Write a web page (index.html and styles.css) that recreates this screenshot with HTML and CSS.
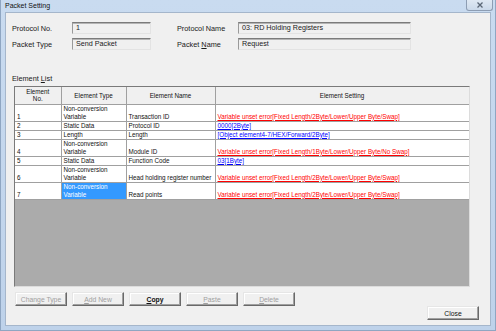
FILE: index.html
```html
<!DOCTYPE html>
<html lang="en">
<head>
    <meta charset="UTF-8">
    <title>Packet Setting</title>
    <link rel="stylesheet" href="styles.css">
</head>
<body>
    <div class="window">
        <!-- Title Bar -->
        <div class="title-bar">
            <span class="title">Packet Setting</span>
            <span class="close-x">
                <svg width="8" height="6" viewBox="0 0 8 6">
                    <path d="M1.5 0.5 L6.5 5.5 M6.5 0.5 L1.5 5.5" stroke="#5a6675" stroke-width="1.3" fill="none"/>
                </svg>
            </span>
        </div>

        <div class="client">
            <!-- Protocol Info -->
            <div class="info-grid">
                <span class="label">Protocol No.</span>
                <span class="field">1</span>
                <span class="label right">Protocol Name</span>
                <span class="field">03: RD Holding Registers</span>

                <span class="label">Packet Type</span>
                <span class="field">Send Packet</span>
                <span class="label right">Packet <u>N</u>ame</span>
                <span class="field">Request</span>
            </div>

            <div class="list-label">Element <u>L</u>ist</div>

            <!-- Element List -->
            <div class="grid-box">
                <table class="element-table">
                    <colgroup>
                        <col class="c-no">
                        <col class="c-type">
                        <col class="c-name">
                        <col class="c-setting">
                    </colgroup>
                    <thead>
                        <tr>
                            <th>Element<br>No.</th>
                            <th>Element Type</th>
                            <th>Element Name</th>
                            <th>Element Setting</th>
                        </tr>
                    </thead>
                    <tbody>
                        <tr>
                            <td>1</td>
                            <td>Non-conversion<br>Variable</td>
                            <td>Transaction ID</td>
                            <td><a class="err">Variable unset error[Fixed Length/2Byte/Lower/Upper Byte/Swap]</a></td>
                        </tr>
                        <tr>
                            <td>2</td>
                            <td>Static Data</td>
                            <td>Protocol ID</td>
                            <td><a class="ok">0000[2Byte]</a></td>
                        </tr>
                        <tr>
                            <td>3</td>
                            <td>Length</td>
                            <td>Length</td>
                            <td><a class="ok">[Object element4-7/HEX/Forward/2Byte]</a></td>
                        </tr>
                        <tr>
                            <td>4</td>
                            <td>Non-conversion<br>Variable</td>
                            <td>Module ID</td>
                            <td><a class="err">Variable unset error[Fixed Length/1Byte/Lower/Upper Byte/No Swap]</a></td>
                        </tr>
                        <tr>
                            <td>5</td>
                            <td>Static Data</td>
                            <td>Function Code</td>
                            <td><a class="ok">03[1Byte]</a></td>
                        </tr>
                        <tr>
                            <td>6</td>
                            <td>Non-conversion<br>Variable</td>
                            <td>Head holding register number</td>
                            <td><a class="err">Variable unset error[Fixed Length/2Byte/Lower/Upper Byte/Swap]</a></td>
                        </tr>
                        <tr>
                            <td>7</td>
                            <td class="selected">Non-conversion<br>Variable</td>
                            <td>Read points</td>
                            <td><a class="err">Variable unset error[Fixed Length/2Byte/Lower/Upper Byte/Swap]</a></td>
                        </tr>
                    </tbody>
                </table>
            </div>

            <!-- Buttons -->
            <div class="button-area">
                <div class="button-row">
                    <button class="btn" disabled>Chan<u>g</u>e Type</button>
                    <button class="btn" disabled><u>A</u>dd New</button>
                    <button class="btn default"><u>C</u>opy</button>
                    <button class="btn" disabled><u>P</u>aste</button>
                    <button class="btn" disabled><u>D</u>elete</button>
                </div>
                <button class="btn close-btn">Close</button>
            </div>
        </div>
    </div>
</body>
</html>
```

FILE: styles.css
```css
* {
    margin: 0;
    padding: 0;
    box-sizing: border-box;
}

html, body {
    width: 100%;
    height: 100%;
    overflow: hidden;
    font-family: 'Liberation Sans', Arial, sans-serif;
    background: #c4d6ec;
}

/* Window Frame */
.window {
    width: 496px;
    height: 331px;
    display: flex;
    flex-direction: column;
    padding: 0 4px 4px 4px;
    background: linear-gradient(#c9dbf0, #bed2ea);
    border: 1px solid #8fa6c2;
    border-top: none;
}

.title-bar {
    height: 13px;
    display: flex;
    align-items: flex-start;
    justify-content: space-between;
}

.title {
    font-size: 7px;
    line-height: 12px;
    color: #111;
}

.close-x {
    width: 27px;
    height: 11px;
    margin-right: -2px;
    display: flex;
    align-items: center;
    justify-content: center;
    border: 1px solid #8d9db3;
    border-top: none;
    border-radius: 0 0 3px 3px;
    background: linear-gradient(#dfe8f3, #cbd9ea);
}

/* Client Area */
.client {
    flex: 1;
    background: #f0f0f0;
    border: 1px solid #a5b6cb;
    padding: 9px 11px 5px 6px;
    display: flex;
    flex-direction: column;
}

.info-grid {
    display: grid;
    grid-template-columns: 60px 79px 87px 173px;
    grid-template-rows: 12px 12px;
    row-gap: 4px;
    align-items: center;
}

.label {
    font-size: 7.3px;
    color: #1a1a1a;
    white-space: nowrap;
}

.label.right {
    padding-left: 26px;
}

.field {
    height: 12px;
    font-size: 7.2px;
    line-height: 10px;
    padding-left: 3px;
    color: #1a1a1a;
    background: #f0f0f0;
    border: 1px solid;
    border-color: #7b7b7b #e3e3e3 #e3e3e3 #9a9a9a;
    box-shadow: inset 0 1px #b4b4b4;
    white-space: nowrap;
    overflow: hidden;
}

.list-label {
    font-size: 7.3px;
    margin-top: 24px;
    line-height: 9px;
    color: #1a1a1a;
}

/* Element Grid */
.grid-box {
    margin: 3px 0 0 2px;
    width: 456px;
    height: 201px;
    background: #ababab;
    border: 1px solid;
    border-color: #7a7a7a #dcdcdc #dcdcdc #7a7a7a;
    overflow: hidden;
}

.element-table {
    width: 454px;
    border-collapse: collapse;
    table-layout: fixed;
    font-size: 6.3px;
    color: #111;
}

.c-no { width: 46px; }
.c-type { width: 65px; }
.c-name { width: 89px; }
.c-setting { width: 254px; }

.element-table th {
    height: 17px;
    font-weight: normal;
    line-height: 7px;
    background: #f0f0f0;
    border-right: 1px solid #a0a0a0;
    border-bottom: 1px solid #a0a0a0;
    text-align: center;
    vertical-align: middle;
}

.element-table td {
    background: #fff;
    line-height: 8px;
    padding: 0 0 0 2px;
    border-right: 1px solid #a0a0a0;
    border-bottom: 1px solid #a0a0a0;
    vertical-align: bottom;
    white-space: nowrap;
    overflow: hidden;
}

.element-table td.selected {
    background: #3399ff;
    color: #fff;
}

.element-table a {
    text-decoration: underline;
}

.err {
    color: #ff0000;
}

.ok {
    color: #0000ff;
}

/* Buttons */
.button-area {
    height: 28px;
    margin-top: 5px;
    display: flex;
    justify-content: space-between;
    align-items: flex-start;
}

.button-row {
    display: flex;
    gap: 5px;
    margin-left: 3px;
}

.btn {
    width: 52px;
    height: 14px;
    font-family: 'Liberation Sans', Arial, sans-serif;
    font-size: 6.8px;
    color: #111;
    background: #f0f0f0;
    border: 1px solid;
    border-color: #e6e6e6 #696969 #696969 #e6e6e6;
    box-shadow: inset -1px -1px #a0a0a0, inset 1px 1px #fff;
}

.btn:disabled {
    color: #a0a0a0;
}

.btn.default {
    font-weight: bold;
}

.close-btn {
    align-self: flex-end;
}
```
